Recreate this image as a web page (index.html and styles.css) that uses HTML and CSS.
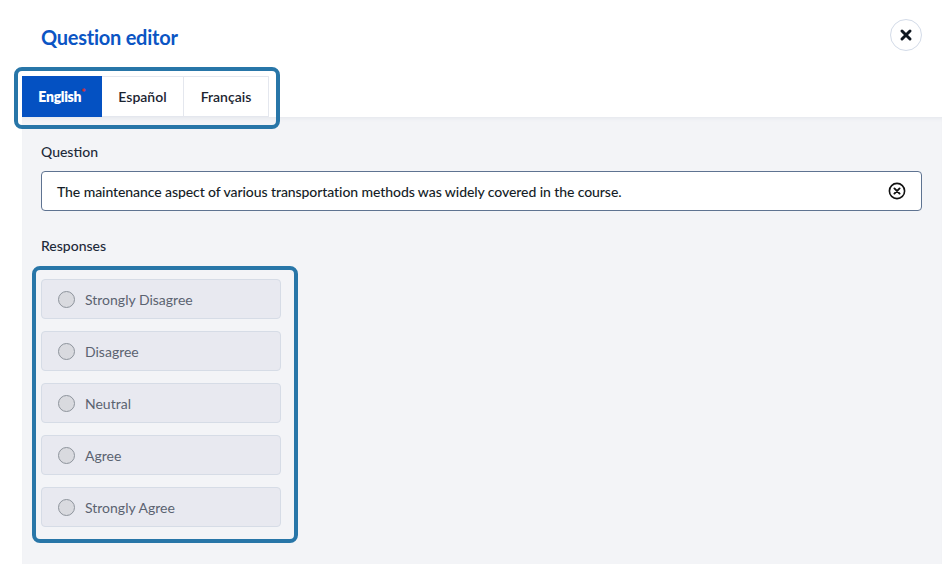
FILE: index.html
```html
<!DOCTYPE html>
<html lang="en">
<head>
<meta charset="utf-8">
<title>Question editor</title>
<link rel="stylesheet" href="styles.css">
</head>
<body>
<div class="page">
  <header class="header">
    <h1 class="title">Question editor</h1>
    <button class="close" aria-label="Close">
      <svg width="14" height="14" viewBox="0 0 14 14"><path d="M3 3 L11 11 M11 3 L3 11" stroke="#0f1720" stroke-width="3" stroke-linecap="round"/></svg>
    </button>
  </header>
  <div class="tabs-wrap">
    <div class="tabs">
      <div class="tab active">English<span class="req">*</span></div>
      <div class="tab">Español</div>
      <div class="tab wide">Français</div>
      <div class="hl hl-tabs"></div>
    </div>
  </div>
  <main class="panel">
    <div class="label">Question</div>
    <div class="input">
      <span class="input-text">The maintenance aspect of various transportation methods was widely covered in the course.</span>
      <svg class="clear" width="18" height="18" viewBox="0 0 18 18"><circle cx="9" cy="9" r="7.6" fill="none" stroke="#111" stroke-width="1.6"/><path d="M6.4 6.4 L11.6 11.6 M11.6 6.4 L6.4 11.6" stroke="#111" stroke-width="1.9" stroke-linecap="round"/></svg>
    </div>
    <div class="label responses-label">Responses</div>
    <div class="responses">
      <div class="resp"><span class="radio"></span>Strongly Disagree</div>
      <div class="resp"><span class="radio"></span>Disagree</div>
      <div class="resp"><span class="radio"></span>Neutral</div>
      <div class="resp"><span class="radio"></span>Agree</div>
      <div class="resp"><span class="radio"></span>Strongly Agree</div>
      <div class="hl hl-resp"></div>
    </div>
  </main>
</div>
</body>
</html>
```
FILE: styles.css
```css
* { box-sizing: border-box; }
html, body { margin: 0; padding: 0; background: #fff; }
body { font-family: Lato, "Noto Sans", sans-serif; color: #1d2a3a; width: 942px; height: 564px; overflow: hidden; }
.page { display: flex; flex-direction: column; height: 564px; }
.header { display: flex; justify-content: space-between; align-items: center; padding: 19px 20px 0 41px; height: 51px; }
.title { margin: 0; font-size: 20px; font-weight: 700; color: #0b55c4; line-height: 32px; letter-spacing: -0.25px; position: relative; top: 2px; }
.close { width: 32px; height: 32px; border-radius: 50%; border: 1px solid #d3dbe8; background: #fff; display: flex; align-items: center; justify-content: center; padding: 0; }
.tabs-wrap { padding: 25px 0 0 22px; }
.tabs { display: flex; position: relative; width: max-content; }
.tab { width: 82px; height: 41px; border: 1px solid #e4e7ee; border-left: none; display: flex; align-items: center; justify-content: center; font-size: 14px; font-weight: 600; color: #1b2430; background: #fff; }
.tab.wide { width: 85px; }
.tab:first-child { border-left: 1px solid #e4e7ee; }
.tab.active { width: 80px; background: #0451c2; border-color: #0451c2; color: #fff; font-weight: 800; letter-spacing: -0.3px; }
.req { color: #d2323c; font-size: 11px; position: relative; top: -4px; margin-left: 0; }
.hl { position: absolute; border: 4px solid #2876a8; border-radius: 8px; pointer-events: none; z-index: 2; }
.hl-tabs { left: -8px; top: -9px; right: -11px; bottom: -12px; }
.panel { flex: 1; margin-left: 22px; background: #f3f4f7; padding: 25px 20px 0 19px; box-shadow: inset 0 4px 4px -3px rgba(40, 60, 100, 0.08); }
.label { font-size: 14px; line-height: 20px; font-weight: 500; color: #1d2a3a; }
.input { margin-top: 9px; height: 40px; background: #fff; border: 1px solid #5e7391; border-radius: 4px; display: flex; align-items: center; justify-content: space-between; padding: 0 15px 0 15px; }
.input-text { font-size: 14px; font-weight: 500; color: #151d27; letter-spacing: -0.08px; }
.clear { display: block; }
.responses-label { margin-top: 25px; }
.responses { position: relative; margin-top: 23px; width: 240px; display: flex; flex-direction: column; gap: 12px; }
.resp { height: 40px; background: #e8e9f0; border: 1px solid #d6dce6; border-radius: 4px; display: flex; align-items: center; padding-left: 16px; font-size: 14px; color: #5b6370; }
.radio { width: 17px; height: 17px; border-radius: 50%; background: #d9dadf; border: 1px solid #8e949c; margin-right: 10px; flex: none; }
.hl-resp { left: -9px; top: -13px; right: -17px; bottom: -16px; }
```
